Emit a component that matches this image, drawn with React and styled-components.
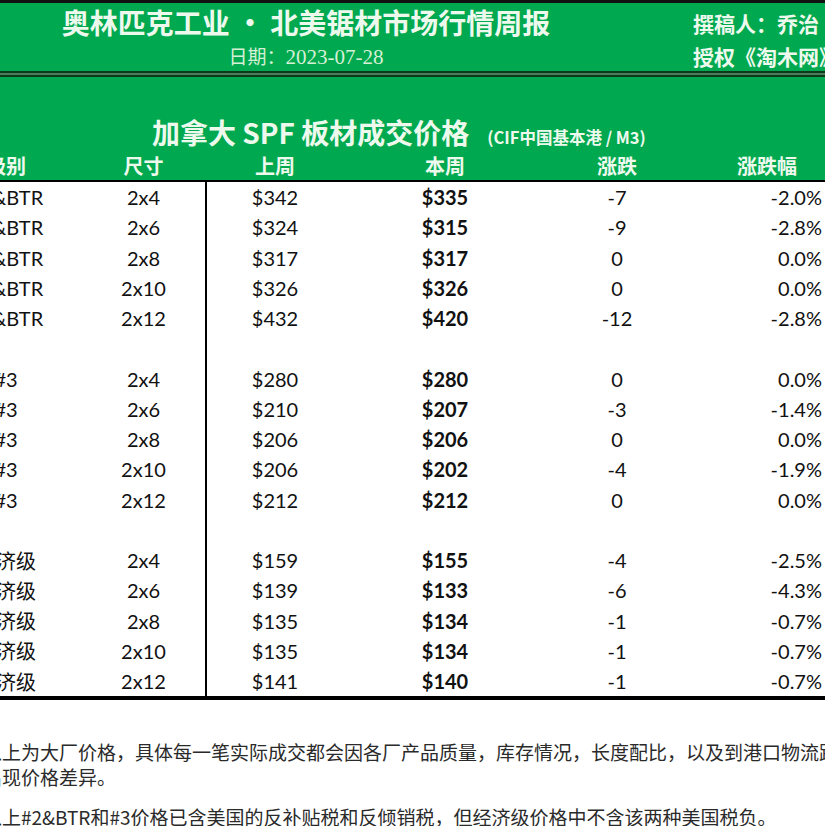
import React from "react"
import styled, { createGlobalStyle } from "styled-components"

const GREEN = "#00a94f"
const INK = "#eef9ee"

const GlobalStyle = createGlobalStyle`
  html, body {
    margin: 0;
    padding: 0;
    background: #fff;
  }
  body {
    width: 825px;
    height: 826px;
    overflow: hidden;
    font-family: "Noto Sans CJK SC", "Noto Sans", sans-serif;
  }
`

const Page = styled.div`
  width: 825px;
  height: 826px;
  overflow: hidden;
  background: #fff;
`

const TopBar = styled.div`
  border-top: 3px solid #111;
  background: ${GREEN};
  height: 68px;
  display: flex;
`

const TitleBlock = styled.div`
  width: 612px;
  flex-shrink: 0;
  display: flex;
  flex-direction: column;
  align-items: center;
`

const MainTitle = styled.div`
  font-size: 28px;
  font-weight: 700;
  line-height: 38px;
  color: ${INK};
  white-space: nowrap;
`

const DateLine = styled.div`
  font-size: 21px;
  line-height: 30px;
  color: #d6f0d6;
  white-space: nowrap;
  font-family: "Liberation Serif", "Noto Sans CJK SC", serif;
  span {
    font-family: "Noto Sans CJK SC", sans-serif;
    font-size: 19px;
  }
`

const SideBlock = styled.div`
  flex-shrink: 0;
  margin-left: 81px;
  padding-top: 4px;
  display: flex;
  flex-direction: column;
  white-space: nowrap;
  font-size: 21px;
  font-weight: 700;
  color: ${INK};
  line-height: 33px;
`

const DoubleRule = styled.div`
  height: 2px;
  background: #4d7d58;
  border-top: 2px solid #0c3a1a;
  border-bottom: 2px solid #0c3a1a;
`

const GreenZone = styled.div`
  background: ${GREEN};
  padding-top: 37px;
`

const TableTitle = styled.div`
  height: 36px;
  display: flex;
  align-items: baseline;
  padding-left: 152px;
  color: ${INK};
  font-weight: 700;
  white-space: nowrap;
`

const BigTitle = styled.span`
  font-size: 28px;
  line-height: 36px;
`

const SubTitle = styled.span`
  margin-left: 18px;
  font-size: 16.5px;
`

const Sheet = styled.div`
  margin-left: -68px;
  width: 915px;
`

const Row = styled.div`
  display: grid;
  grid-template-columns: 148px 127px 136px 204px 140px 160px;
  height: ${p => (p.$head ? "30px" : "30.25px")};
  background: ${p => (p.$head ? GREEN : "#fff")};
  border-bottom: ${p => (p.$head ? "2px solid #000" : "none")};
  box-sizing: content-box;
`

const Cell = styled.div`
  display: flex;
  align-items: center;
  justify-content: ${p => (p.$right ? "flex-end" : "center")};
  padding-right: ${p => (p.$right ? "25px" : "0")};
  border-left: ${p => (p.$rule ? "2px solid #000" : "none")};
  margin-left: ${p => (p.$rule ? "-2px" : "0")};
  font-family: Lato, "Noto Sans CJK SC", sans-serif;
  font-size: 20px;
  font-weight: ${p => (p.$bold ? 700 : 400)};
  color: #111;
  white-space: nowrap;
`

const HeadCell = styled.div`
  display: flex;
  align-items: center;
  justify-content: center;
  font-size: 20px;
  font-weight: 700;
  color: ${INK};
  white-space: nowrap;
`

const Body = styled.div`
  border-bottom: 4px solid #000;
`

const Notes = styled.div`
  padding-top: 39px;
  margin-left: -17px;
  font-size: 19px;
  color: #2a2a2a;
  white-space: nowrap;
`

const NoteLine = styled.div`
  line-height: 25px;
`

const NoteGap = styled.div`
  height: 15px;
`

const rows = [
  ["#2&BTR", "2x4", "$342", "$335", "-7", "-2.0%"],
  ["#2&BTR", "2x6", "$324", "$315", "-9", "-2.8%"],
  ["#2&BTR", "2x8", "$317", "$317", "0", "0.0%"],
  ["#2&BTR", "2x10", "$326", "$326", "0", "0.0%"],
  ["#2&BTR", "2x12", "$432", "$420", "-12", "-2.8%"],
  null,
  ["#3", "2x4", "$280", "$280", "0", "0.0%"],
  ["#3", "2x6", "$210", "$207", "-3", "-1.4%"],
  ["#3", "2x8", "$206", "$206", "0", "0.0%"],
  ["#3", "2x10", "$206", "$202", "-4", "-1.9%"],
  ["#3", "2x12", "$212", "$212", "0", "0.0%"],
  null,
  ["经济级", "2x4", "$159", "$155", "-4", "-2.5%"],
  ["经济级", "2x6", "$139", "$133", "-6", "-4.3%"],
  ["经济级", "2x8", "$135", "$134", "-1", "-0.7%"],
  ["经济级", "2x10", "$135", "$134", "-1", "-0.7%"],
  ["经济级", "2x12", "$141", "$140", "-1", "-0.7%"],
]

const headers = ["级别", "尺寸", "上周", "本周", "涨跌", "涨跌幅"]

export default function App() {
  return (
    <Page>
      <GlobalStyle />
      <TopBar>
        <TitleBlock>
          <MainTitle>奥林匹克工业 · 北美锯材市场行情周报</MainTitle>
          <DateLine>
            <span>日期：</span>2023-07-28
          </DateLine>
        </TitleBlock>
        <SideBlock>
          <div>撰稿人：乔治</div>
          <div>授权《淘木网》</div>
        </SideBlock>
      </TopBar>
      <DoubleRule />
      <GreenZone>
        <TableTitle>
          <BigTitle>加拿大 SPF 板材成交价格</BigTitle>
          <SubTitle>(CIF中国基本港 / M3)</SubTitle>
        </TableTitle>
      </GreenZone>
      <Sheet>
        <Row $head>
          {headers.map(h => (
            <HeadCell key={h}>{h}</HeadCell>
          ))}
        </Row>
        <Body>
          {rows.map((r, i) => (
            <Row key={i}>
              <Cell>{r ? r[0] : ""}</Cell>
              <Cell>{r ? r[1] : ""}</Cell>
              <Cell $rule>{r ? r[2] : ""}</Cell>
              <Cell $bold>{r ? r[3] : ""}</Cell>
              <Cell>{r ? r[4] : ""}</Cell>
              <Cell $right>{r ? r[5] : ""}</Cell>
            </Row>
          ))}
        </Body>
      </Sheet>
      <Notes>
        <NoteLine>以上为大厂价格，具体每一笔实际成交都会因各厂产品质量，库存情况，长度配比，以及到港口物流距离的不同而</NoteLine>
        <NoteLine>出现价格差异。</NoteLine>
        <NoteGap />
        <NoteLine>以上#2&amp;BTR和#3价格已含美国的反补贴税和反倾销税，但经济级价格中不含该两种美国税负。</NoteLine>
      </Notes>
    </Page>
  )
}
